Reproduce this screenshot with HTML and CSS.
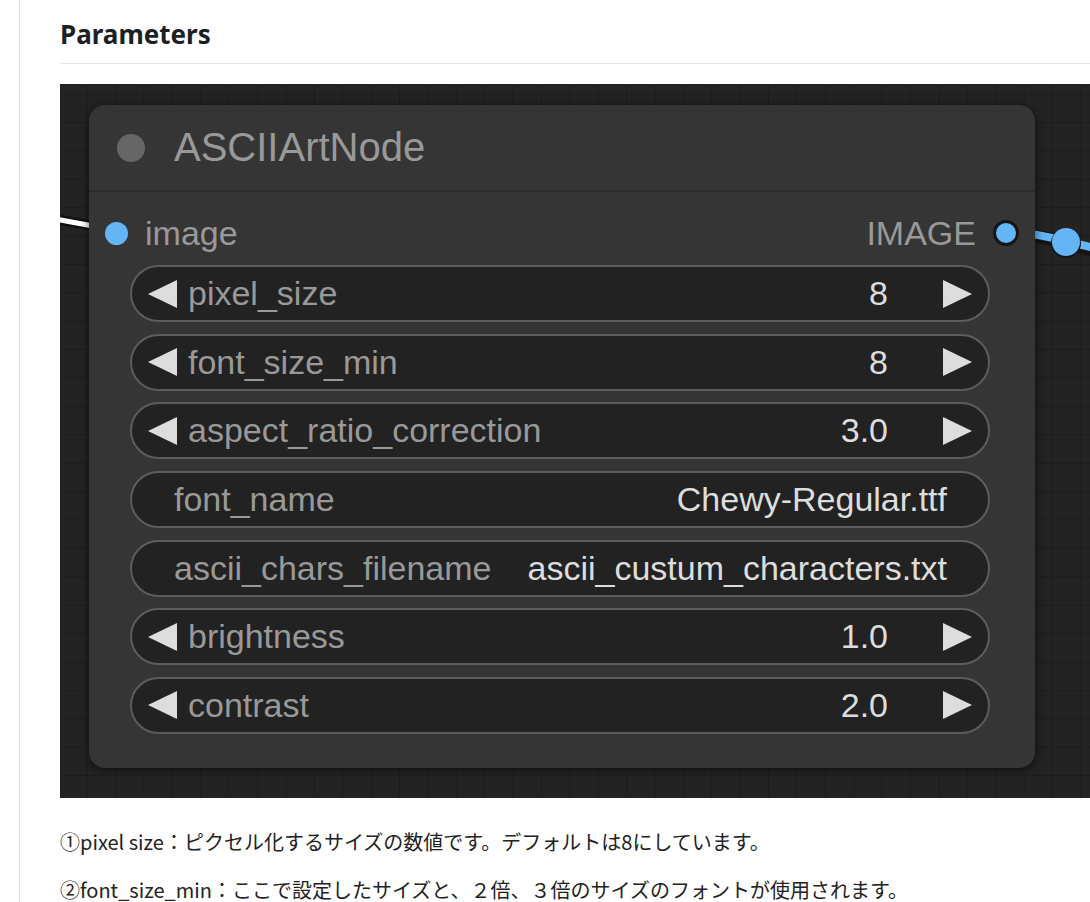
FILE: index.html
```html
<!DOCTYPE html>
<html lang="ja">
<head>
  <meta charset="UTF-8">
  <title>ASCIIArtNode Parameters</title>
  <link rel="stylesheet" href="styles.css">
</head>
<body>
  <div class="article">
    <h2>Parameters</h2>

    <div class="canvas">
      <svg class="links" width="1060" height="714" viewBox="0 0 1060 714">
        <path d="M-10 134 L60 147" stroke="#111" stroke-width="10" fill="none"/>
        <path d="M-10 134 L60 147" stroke="#fff" stroke-width="5" fill="none"/>
        <path d="M946 147 C975 152 990 154 1006 159 S1030 166 1060 170" stroke="#141414" stroke-width="13" fill="none"/>
        <path d="M946 146 C975 150 990 153 1006 157 S1030 164 1060 168" stroke="#64b5f6" stroke-width="8" fill="none"/>
        <circle cx="1006" cy="159" r="15" fill="#141414"/>
        <circle cx="1006" cy="158" r="14" fill="#64b5f6"/>
      </svg>

      <div class="node">
        <div class="node-title">
          <span class="title-dot"></span>
          <span>ASCIIArtNode</span>
        </div>
        <div class="node-body">
          <div class="slots">
            <div class="slot">
              <span class="slot-dot"></span>
              <span>image</span>
            </div>
            <div class="slot">
              <span>IMAGE</span>
              <span class="slot-dot out"></span>
            </div>
          </div>

          <div class="widget">
            <svg class="arrow" viewBox="0 0 29 28"><polygon points="29,0 29,28 0,14"/></svg>
            <span class="label">pixel_size</span>
            <span class="value">8</span>
            <svg class="arrow" viewBox="0 0 29 28"><polygon points="0,0 0,28 29,14"/></svg>
          </div>
          <div class="widget">
            <svg class="arrow" viewBox="0 0 29 28"><polygon points="29,0 29,28 0,14"/></svg>
            <span class="label">font_size_min</span>
            <span class="value">8</span>
            <svg class="arrow" viewBox="0 0 29 28"><polygon points="0,0 0,28 29,14"/></svg>
          </div>
          <div class="widget">
            <svg class="arrow" viewBox="0 0 29 28"><polygon points="29,0 29,28 0,14"/></svg>
            <span class="label">aspect_ratio_correction</span>
            <span class="value">3.0</span>
            <svg class="arrow" viewBox="0 0 29 28"><polygon points="0,0 0,28 29,14"/></svg>
          </div>
          <div class="widget text">
            <span class="label">font_name</span>
            <span class="value">Chewy-Regular.ttf</span>
          </div>
          <div class="widget text">
            <span class="label">ascii_chars_filename</span>
            <span class="value">ascii_custum_characters.txt</span>
          </div>
          <div class="widget">
            <svg class="arrow" viewBox="0 0 29 28"><polygon points="29,0 29,28 0,14"/></svg>
            <span class="label">brightness</span>
            <span class="value">1.0</span>
            <svg class="arrow" viewBox="0 0 29 28"><polygon points="0,0 0,28 29,14"/></svg>
          </div>
          <div class="widget">
            <svg class="arrow" viewBox="0 0 29 28"><polygon points="29,0 29,28 0,14"/></svg>
            <span class="label">contrast</span>
            <span class="value">2.0</span>
            <svg class="arrow" viewBox="0 0 29 28"><polygon points="0,0 0,28 29,14"/></svg>
          </div>
        </div>
      </div>
    </div>

    <p>①pixel size：ピクセル化するサイズの数値です。デフォルトは8にしています。</p>
    <p>②font_size_min：ここで設定したサイズと、２倍、３倍のサイズのフォントが使用されます。</p>
  </div>
</body>
</html>
```

FILE: styles.css
```css
html,
body {
  margin: 0;
  padding: 0;
  background: #ffffff;
  overflow: hidden;
}

body {
  font-family: 'Noto Sans', 'Noto Sans CJK JP', sans-serif;
  color: #222;
}

.article {
  margin-left: 19px;
  border-left: 1px solid #dcdfe3;
  padding: 15px 0 0 40px;
  width: 1100px;
  min-height: 902px;
  box-sizing: border-box;
}

h2 {
  margin: 0;
  padding-bottom: 10px;
  font-size: 26px;
  font-weight: 700;
  line-height: 38px;
  color: #1c1f23;
  border-bottom: 1px solid #e3e5e8;
}

.canvas {
  position: relative;
  height: 714px;
  margin: 20px 0 29px;
  overflow: hidden;
  background-color: #232323;
  background-image:
    linear-gradient(#1c1c1c 1px, transparent 1px),
    linear-gradient(90deg, #1c1c1c 1px, transparent 1px);
  background-size: 28.4px 28.4px;
  background-position: 26.7px 9.6px;
  font-family: 'Liberation Sans', Arial, sans-serif;
}

.links {
  position: absolute;
  left: 0;
  top: 0;
}

.node {
  position: absolute;
  left: 29px;
  top: 21px;
  width: 946px;
  background: #353535;
  border-radius: 16px;
  box-shadow: 0 2px 10px rgba(0, 0, 0, 0.6);
}

.node-title {
  display: flex;
  align-items: center;
  gap: 29px;
  height: 85px;
  padding-left: 28px;
  font-size: 40px;
  color: #999;
  border-bottom: 2px solid #2c2c2c;
}

.title-dot {
  width: 28px;
  height: 28px;
  border-radius: 50%;
  background: #666;
}

.node-body {
  padding: 17px 0 34px;
}

.slots {
  display: flex;
  justify-content: space-between;
  align-items: center;
  height: 48px;
  padding: 0 16px;
  margin-bottom: 8px;
  font-size: 34px;
  color: #999;
}

.slot {
  display: flex;
  align-items: center;
  gap: 17px;
}

.slot-dot {
  width: 23px;
  height: 23px;
  border-radius: 50%;
  background: #64b5f6;
}

.slot-dot.out {
  width: 20px;
  height: 20px;
  border: 3px solid #151515;
}

.widget {
  display: flex;
  align-items: center;
  height: 57px;
  margin: 0 45px 11.67px 41px;
  padding: 0 16px;
  box-sizing: border-box;
  background: #222;
  border: 2px solid #5c5c5c;
  border-radius: 29px;
  font-size: 34px;
}

.widget:last-child {
  margin-bottom: 0;
}

.widget .arrow {
  width: 29px;
  height: 28px;
  fill: #ddd;
}

.widget .label {
  flex: 1;
  margin-left: 11px;
  color: #999;
  white-space: nowrap;
}

.widget .value {
  margin-right: 55px;
  color: #ddd;
  white-space: nowrap;
}

.widget.text {
  padding: 0 41px 0 42px;
}

.widget.text .label {
  margin-left: 0;
}

.widget.text .value {
  margin-right: 0;
}

p {
  margin: 0 0 18px;
  font-family: 'Noto Sans CJK JP', sans-serif;
  font-size: 20px;
  line-height: 30px;
  color: #222;
}
```
